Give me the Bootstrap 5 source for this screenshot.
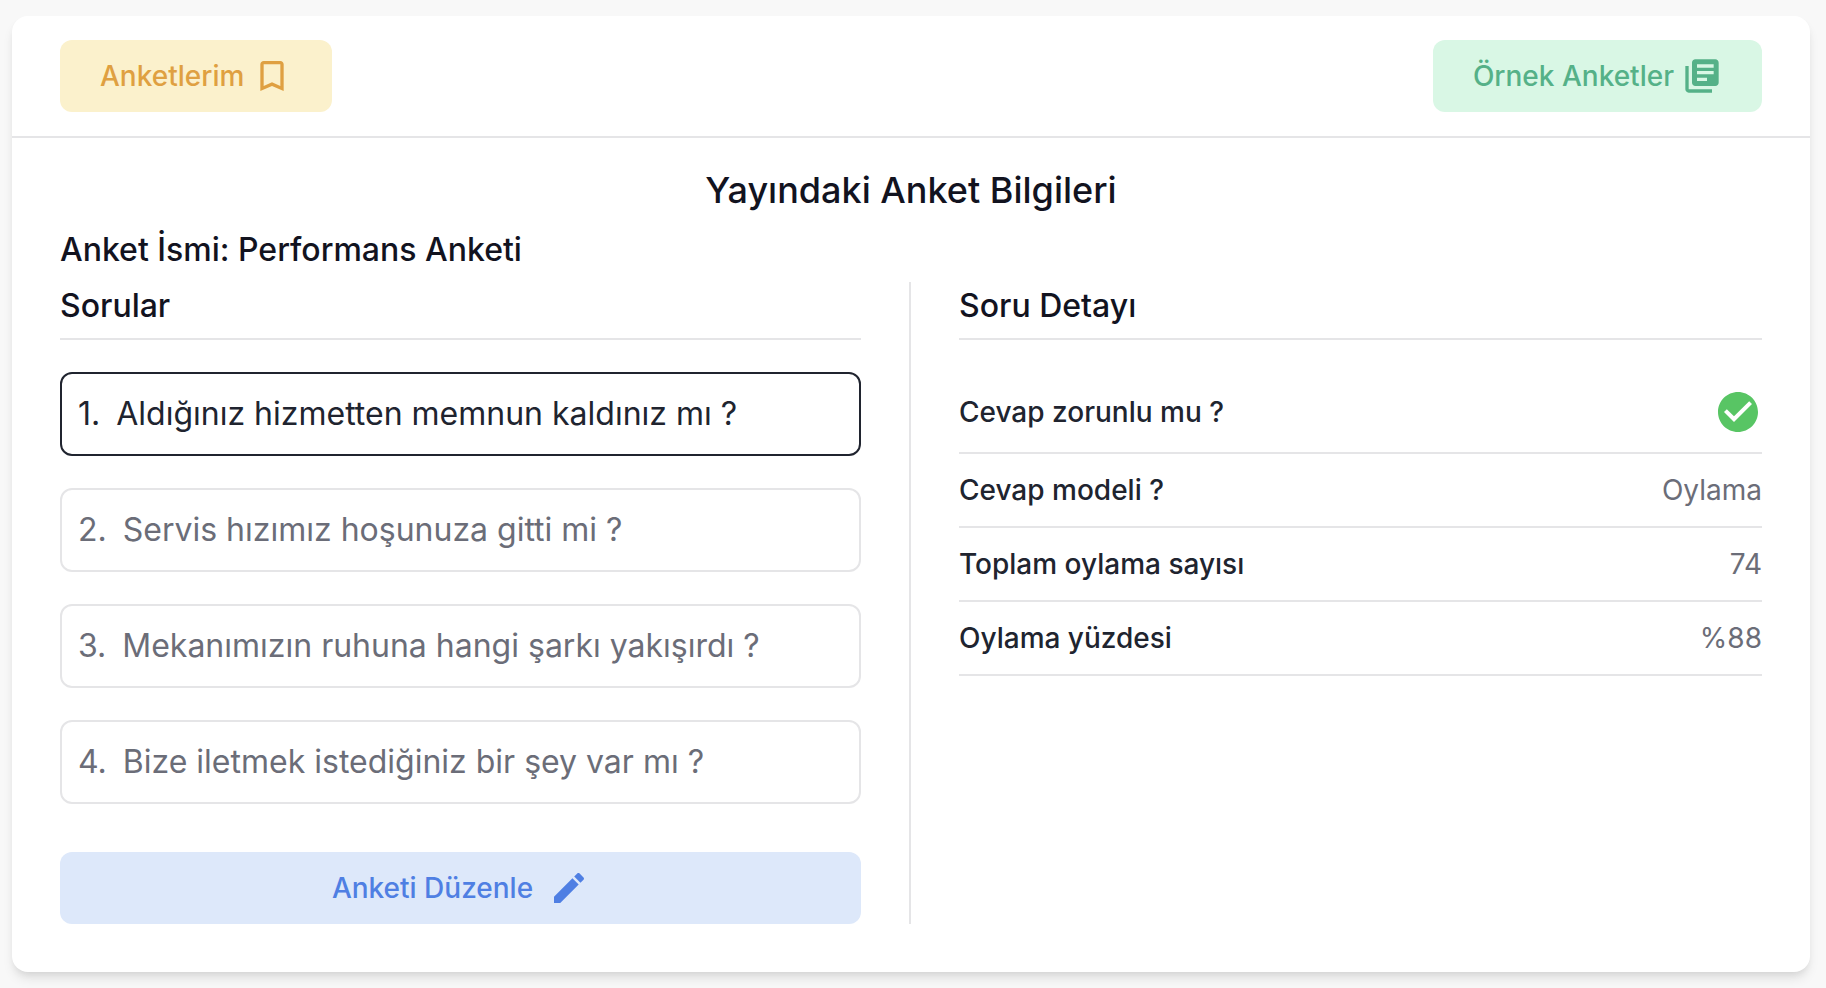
<!DOCTYPE html>
<html lang="tr">
<head>
<meta charset="utf-8">
<meta name="viewport" content="width=device-width, initial-scale=1">
<title>Yayındaki Anket Bilgileri</title>
<link href="https://cdn.jsdelivr.net/npm/bootstrap@5.3.0/dist/css/bootstrap.min.css" rel="stylesheet">
<style>
  :root { --line: #e5e5e7; --ink: #12131f; --ink-soft: #20242f; --muted: #6b6d78; }
  body { background: #f8f8f8; font-family: Inter, "Liberation Sans", sans-serif; color: var(--ink); padding: 16px 16px 16px 12px; }
  .survey-panel { border: 0; border-radius: 16px; box-shadow: 0 8px 12px -2px rgba(0,0,0,.1), 0 4px 8px -4px rgba(0,0,0,.1); }
  .survey-top { padding: 24px 48px; border-bottom: 2px solid var(--line); }
  .survey-main { padding: 32px 48px 48px; }
  .soft-btn { --bs-btn-border-width: 0; padding: 16px 40px; font-size: 28px; line-height: 40px; font-weight: 500; border-radius: 12px; }
  .soft-btn svg { width: 40px; height: 40px; fill: currentColor; flex: none; }
  .soft-yellow, .soft-yellow:hover { background: #fbf1cc; color: #dfa041; }
  .soft-green, .soft-green:hover { background: #d9f7e5; color: #55b188; }
  .soft-blue, .soft-blue:hover { background: #dde8fa; color: #4f7fe3; }
  .survey-title { font-size: 36px; line-height: 40px; font-weight: 500; margin-bottom: 16px; }
  .survey-sub { font-size: 32px; line-height: 48px; font-weight: 500; margin-bottom: 8px; }
  .pane-head { padding-bottom: 8px; border-bottom: 2px solid var(--line); margin-bottom: 32px; }
  .pane-left { padding-right: 48px; border-right: 2px solid var(--line); }
  .pane-right { padding-left: 48px; }
  .question-list { gap: 32px; margin-bottom: 48px; }
  .question { gap: 16px; padding: 16px; font-size: 32px; line-height: 48px; color: var(--muted); background: #fff; border: 2px solid var(--line); border-radius: 12px; }
  .question.active { color: var(--ink-soft); border-color: var(--ink-soft); }
  .detail { padding: 16px 0; font-size: 28px; line-height: 40px; border-bottom: 2px solid var(--line); }
  .detail dt { font-weight: 500; color: var(--ink-soft); }
  .detail dd { color: var(--muted); }
  .detail svg { display: block; width: 48px; height: 48px; fill: #58c564; }
</style>
</head>
<body>
<main class="card survey-panel">
  <header class="survey-top d-flex justify-content-between">
    <button type="button" class="btn soft-btn soft-yellow d-flex align-items-center gap-2">Anketlerim
      <svg viewBox="0 0 24 24" aria-hidden="true"><path d="M17 3H7c-1.100 0-2 .9-2 2v16l7-3 7 3V5c0-1.100-.9-2-2-2zm0 15-5-2.180L7 18V5h10v13z"/></svg>
    </button>
    <button type="button" class="btn soft-btn soft-green d-flex align-items-center gap-2">Örnek Anketler
      <svg viewBox="0 0 24 24" aria-hidden="true"><path d="M4 6H2v14c0 1.100.9 2 2 2h14v-2H4V6zm16-4H8c-1.100 0-2 .9-2 2v12c0 1.100.9 2 2 2h12c1.100 0 2-.9 2-2V4c0-1.100-.9-2-2-2zm-1 9H9V9h10v2zm-4 4H9v-2h6v2zm4-8H9V5h10v2z"/></svg>
    </button>
  </header>
  <div class="survey-main">
    <h1 class="survey-title text-center">Yayındaki Anket Bilgileri</h1>
    <h2 class="survey-sub">Anket İsmi: Performans Anketi</h2>
    <div class="row g-0">
      <section class="col-6 pane-left">
        <h3 class="survey-sub pane-head">Sorular</h3>
        <ul class="question-list list-unstyled d-flex flex-column">
          <li><button type="button" class="question active d-flex w-100 text-start" aria-pressed="true"><span>1.</span><span>Aldığınız hizmetten memnun kaldınız mı ?</span></button></li>
          <li><button type="button" class="question d-flex w-100 text-start"><span>2.</span><span>Servis hızımız hoşunuza gitti mi ?</span></button></li>
          <li><button type="button" class="question d-flex w-100 text-start"><span>3.</span><span>Mekanımızın ruhuna hangi şarkı yakışırdı ?</span></button></li>
          <li><button type="button" class="question d-flex w-100 text-start"><span>4.</span><span>Bize iletmek istediğiniz bir şey var mı ?</span></button></li>
        </ul>
        <button type="button" class="btn soft-btn soft-blue w-100 d-flex align-items-center justify-content-center gap-3">Anketi Düzenle
          <svg viewBox="0 0 24 24" aria-hidden="true"><path d="M3 17.250V21h3.750L17.810 9.940l-3.750-3.750L3 17.250zM20.710 7.040c.39-.39.39-1.020 0-1.410l-2.340-2.340c-.39-.39-1.020-.39-1.410 0l-1.830 1.830 3.750 3.750 1.830-1.830z"/></svg>
        </button>
      </section>
      <section class="col-6 pane-right">
        <h3 class="survey-sub pane-head">Soru Detayı</h3>
        <dl class="mb-0">
          <div class="detail d-flex justify-content-between align-items-center"><dt>Cevap zorunlu mu ?</dt><dd class="mb-0"><svg viewBox="0 0 24 24" role="img" aria-label="Evet"><path d="M12 2C6.480 2 2 6.480 2 12s4.480 10 10 10 10-4.480 10-10S17.520 2 12 2zm-2 15-5-5 1.410-1.410L10 14.170l7.590-7.590L19 8l-9 9z"/></svg></dd></div>
          <div class="detail d-flex justify-content-between align-items-center"><dt>Cevap modeli ?</dt><dd class="mb-0">Oylama</dd></div>
          <div class="detail d-flex justify-content-between align-items-center"><dt>Toplam oylama sayısı</dt><dd class="mb-0">74</dd></div>
          <div class="detail d-flex justify-content-between align-items-center"><dt>Oylama yüzdesi</dt><dd class="mb-0">%88</dd></div>
        </dl>
      </section>
    </div>
  </div>
</main>
<script src="https://cdn.jsdelivr.net/npm/bootstrap@5.3.0/dist/js/bootstrap.bundle.min.js"></script>
</body>
</html>
